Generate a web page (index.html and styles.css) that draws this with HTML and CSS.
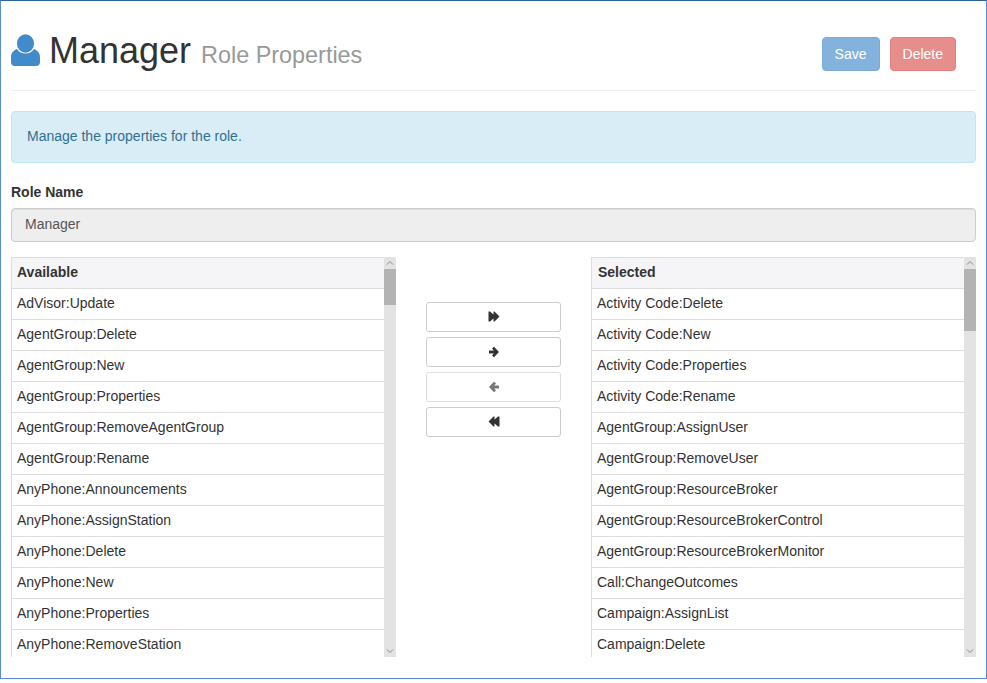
FILE: index.html
```html
<!DOCTYPE html>
<html lang="en">
<head>
    <meta charset="utf-8"/>
    <title>Role Properties</title>
    <link rel="stylesheet" href="styles.css">
</head>
<body>
<div class="frame">
    <div class="page-header">
        <h1 class="title">
            <svg class="user-icon" viewBox="0 0 29 32" width="29" height="32"><path d="M6 15C2.500 16.500 0 19 0 23V28C0 30.500 1.500 32 4 32H25C27.500 32 29 30.500 29 28V23C29 19 26.500 16.500 23 15C21 18 18 19.500 14.500 19.500C11 19.500 8 18 6 15Z"/><ellipse cx="14.500" cy="9.500" rx="8.600" ry="9.200"/></svg>
            Manager <small class="subtitle">Role Properties</small>
        </h1>
        <div class="actions">
            <button class="btn btn-primary">Save</button>
            <button class="btn btn-danger">Delete</button>
        </div>
    </div>

    <div class="alert">Manage the properties for the role.</div>

    <label class="field-label">Role Name</label>
    <div class="field-input">Manager</div>

    <div class="picker">
        <div class="list">
            <div class="list-body">
                <div class="list-head">Available</div>
                <div class="list-row">AdVisor:Update</div>
                <div class="list-row">AgentGroup:Delete</div>
                <div class="list-row">AgentGroup:New</div>
                <div class="list-row">AgentGroup:Properties</div>
                <div class="list-row">AgentGroup:RemoveAgentGroup</div>
                <div class="list-row">AgentGroup:Rename</div>
                <div class="list-row">AnyPhone:Announcements</div>
                <div class="list-row">AnyPhone:AssignStation</div>
                <div class="list-row">AnyPhone:Delete</div>
                <div class="list-row">AnyPhone:New</div>
                <div class="list-row">AnyPhone:Properties</div>
                <div class="list-row">AnyPhone:RemoveStation</div>
            </div>
            <div class="scrollbar">
                <svg class="arrow" viewBox="0 0 12 12" width="12" height="12"><path d="M3 7.500L6 4.500L9 7.500"/></svg>
                <div class="thumb thumb-short"></div>
                <svg class="arrow arrow-down" viewBox="0 0 12 12" width="12" height="12"><path d="M3 4.500L6 7.500L9 4.500"/></svg>
            </div>
        </div>

        <div class="movers">
            <button class="move-btn"><svg viewBox="0 0 12 12" width="12" height="12"><path d="M0.500 0.500H2L5.500 3.500V0.500H6.500L11.500 5.500L6.500 10.500H5.500V7.500L2 10.500H0.500Z"/></svg></button>
            <button class="move-btn"><svg viewBox="0 0 12 12" width="12" height="12"><path d="M6 0.800L11 6L6 11.200L4 9.400L5.800 7.600H1V4.400H5.800L4 2.600Z"/></svg></button>
            <button class="move-btn is-disabled"><svg viewBox="0 0 12 12" width="12" height="12"><path d="M6 0.800L1 6L6 11.200L8 9.400L6.200 7.600H11V4.400H6.200L8 2.600Z"/></svg></button>
            <button class="move-btn"><svg viewBox="0 0 12 12" width="12" height="12"><path d="M11.500 0.500H10L6.500 3.500V0.500H5.500L0.500 5.500L5.500 10.500H6.500V7.500L10 10.500H11.500Z"/></svg></button>
        </div>

        <div class="list">
            <div class="list-body">
                <div class="list-head list-head-selected">Selected</div>
                <div class="list-row">Activity Code:Delete</div>
                <div class="list-row">Activity Code:New</div>
                <div class="list-row">Activity Code:Properties</div>
                <div class="list-row">Activity Code:Rename</div>
                <div class="list-row">AgentGroup:AssignUser</div>
                <div class="list-row">AgentGroup:RemoveUser</div>
                <div class="list-row">AgentGroup:ResourceBroker</div>
                <div class="list-row">AgentGroup:ResourceBrokerControl</div>
                <div class="list-row">AgentGroup:ResourceBrokerMonitor</div>
                <div class="list-row">Call:ChangeOutcomes</div>
                <div class="list-row">Campaign:AssignList</div>
                <div class="list-row">Campaign:Delete</div>
            </div>
            <div class="scrollbar">
                <svg class="arrow" viewBox="0 0 12 12" width="12" height="12"><path d="M3 7.500L6 4.500L9 7.500"/></svg>
                <div class="thumb thumb-long"></div>
                <svg class="arrow arrow-down" viewBox="0 0 12 12" width="12" height="12"><path d="M3 4.500L6 7.500L9 4.500"/></svg>
            </div>
        </div>
    </div>
</div>
</body>
</html>
```

FILE: styles.css
```css
html, body {
    margin: 0;
    padding: 0;
    background: #fff;
}

body {
    font-family: "Liberation Sans", Arial, sans-serif;
    font-size: 14px;
    line-height: 20px;
    color: #333;
}

.frame {
    box-sizing: border-box;
    width: 987px;
    height: 679px;
    padding: 0 10px;
    border: 1px solid #5a8bd6;
    border-top-color: #2a6496;
    overflow: hidden;
}

.page-header {
    display: flex;
    justify-content: space-between;
    align-items: flex-start;
    height: 89px;
    border-bottom: 1px solid #eee;
    padding-right: 20px;
}

.title {
    display: flex;
    align-items: baseline;
    margin: 30px 0 0;
    font-size: 36px;
    line-height: 40px;
    font-weight: 400;
}

.user-icon {
    align-self: flex-start;
    margin: 3px 9px 0 0;
    fill: #428bca;
}

.subtitle {
    margin-left: 10px;
    font-size: 23.4px;
    line-height: 1;
    color: #999;
}

.actions {
    display: flex;
    gap: 10px;
    margin-top: 36px;
}

.btn {
    height: 34px;
    padding: 0 12px;
    border: 1px solid transparent;
    border-radius: 4px;
    font-family: inherit;
    font-size: 14px;
    color: #fff;
    opacity: .65;
}

.btn-primary {
    background: #428bca;
    border-color: #357ebd;
}

.btn-danger {
    background: #d9534f;
    border-color: #d43f3a;
}

.alert {
    margin-top: 20px;
    padding: 14px 15px 16px;
    background: #d9edf7;
    border: 1px solid #bce8f1;
    border-radius: 4px;
    color: #31708f;
}

.field-label {
    display: block;
    margin-top: 19px;
    font-weight: 700;
}

.field-input {
    box-sizing: border-box;
    height: 34px;
    margin-top: 6px;
    padding: 5px 13px;
    background: #eee;
    border: 1px solid #ccc;
    border-radius: 4px;
    box-shadow: inset 0 1px 1px rgba(0, 0, 0, .075);
    color: #555;
}

.picker {
    display: grid;
    grid-template-columns: 385px 195px 385px;
    margin-top: 15px;
}

.list {
    display: flex;
    height: 400px;
}

.list-body {
    flex: 1;
    overflow: hidden;
    border-left: 1px solid #ddd;
}

.list-head {
    box-sizing: border-box;
    height: 32px;
    padding: 4px 5px;
    background: #f5f5f7;
    border-top: 1px solid #ddd;
    border-bottom: 1px solid #ddd;
    font-weight: 700;
}

.list-head-selected {
    padding-left: 6px;
}

.list-row {
    box-sizing: border-box;
    height: 31px;
    padding: 4px 5px;
    border-bottom: 1px solid #ddd;
}

.scrollbar {
    display: flex;
    flex-direction: column;
    width: 12px;
    height: 400px;
    background: #e3e3e3;
}

.arrow {
    display: block;
    fill: none;
    stroke: #888;
    stroke-width: 1;
}

.arrow-down {
    margin-top: auto;
}

.thumb {
    background: #b3b3b3;
}

.thumb-short {
    height: 36px;
}

.thumb-long {
    height: 62px;
}

.movers {
    display: flex;
    flex-direction: column;
    gap: 5px;
    padding: 45px 30px 0;
}

.move-btn {
    display: flex;
    align-items: center;
    justify-content: center;
    height: 30px;
    padding: 0;
    background: #fff;
    border: 1px solid #ccc;
    border-radius: 3px;
}

.move-btn svg {
    fill: #333;
}

.move-btn.is-disabled {
    opacity: .65;
}
```
